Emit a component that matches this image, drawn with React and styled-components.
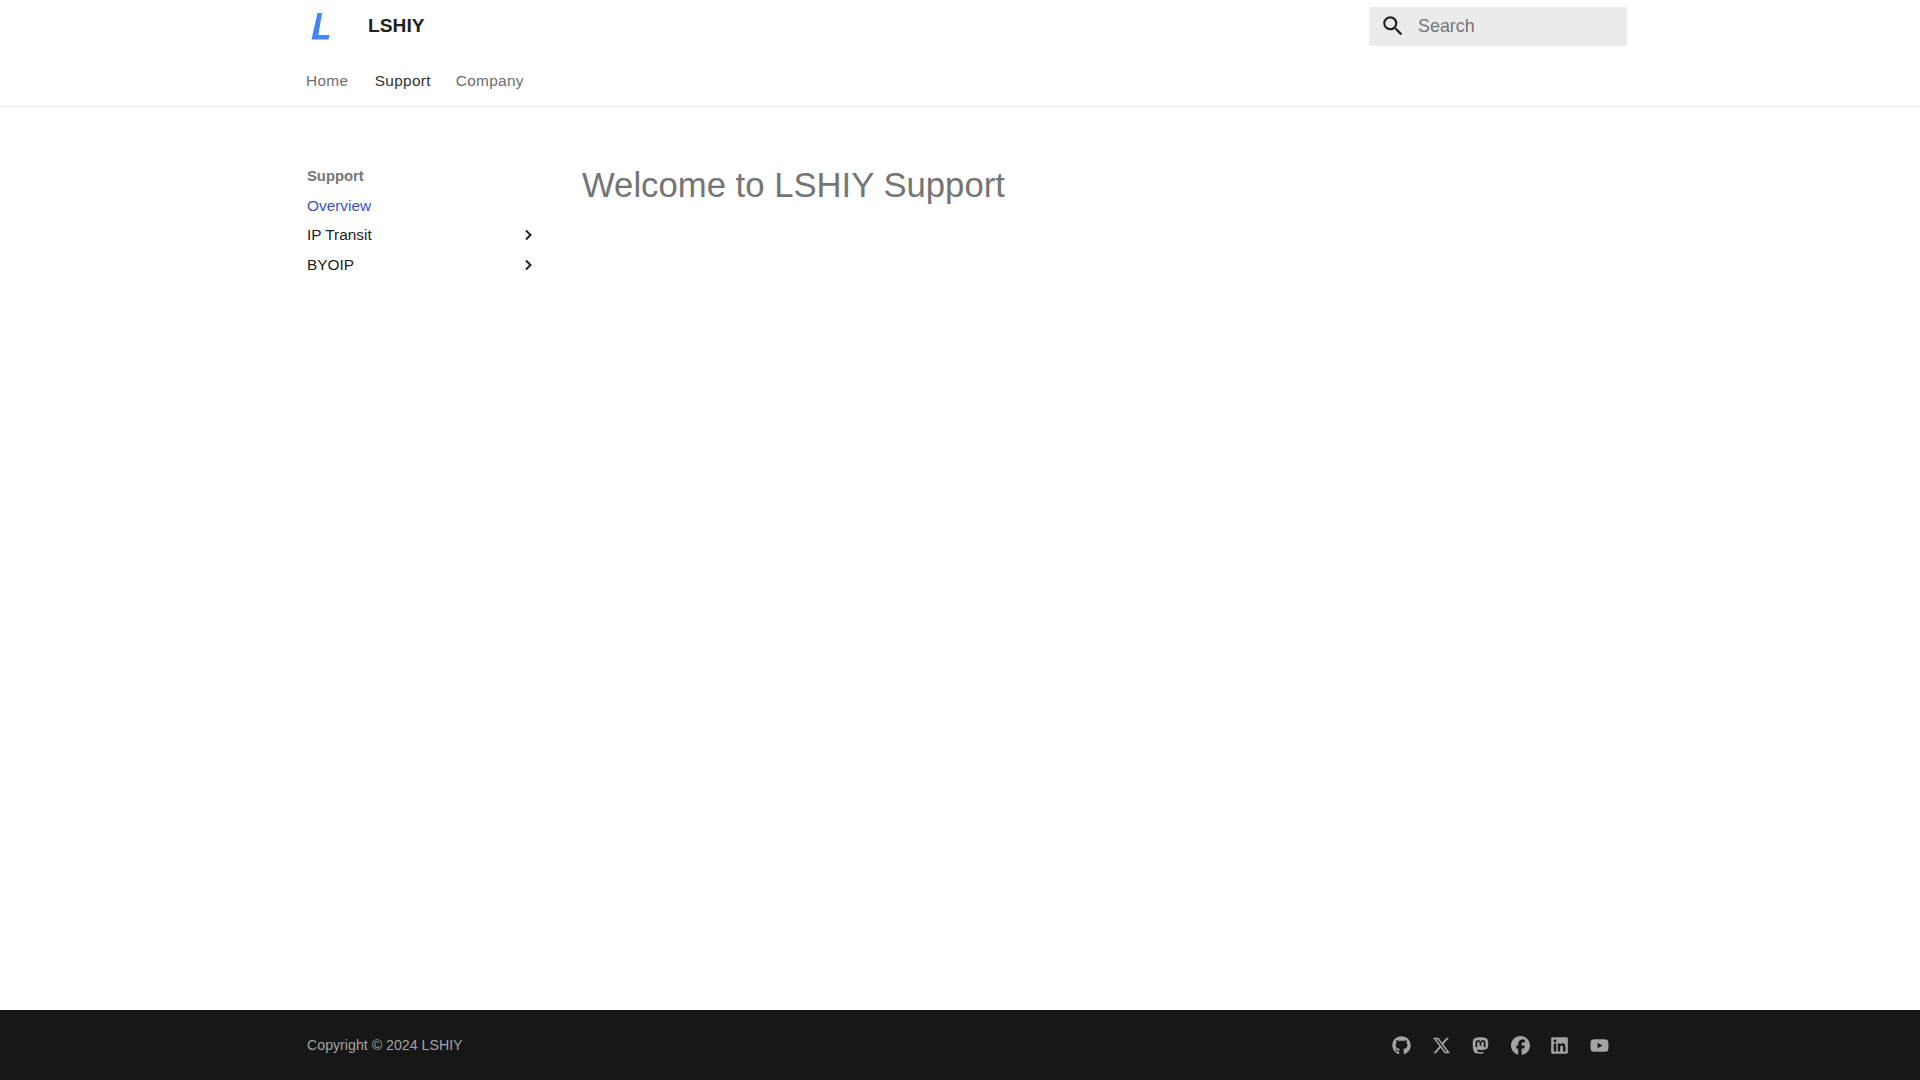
import React from 'react';
import styled, { createGlobalStyle } from 'styled-components';
import { FaGithub, FaXTwitter, FaMastodon, FaFacebook, FaLinkedin, FaYoutube } from 'react-icons/fa6';
import { MdSearch } from 'react-icons/md';

const Global = createGlobalStyle`
  html, body { margin: 0; padding: 0; height: 100%; }
  body { font-family: "Liberation Sans", Arial, sans-serif; background: #fff; color: #212121; }
  #root { height: 100%; }
`;

const Page = styled.div`
  display: flex;
  flex-direction: column;
  height: 1080px;
`;

const Header = styled.header`
  height: 106px;
  border-bottom: 1px solid #ebebeb;
  box-sizing: content-box;
  flex: none;
`;

const Container = styled.div`
  width: 1321px;
  margin-left: 306px;
  box-sizing: border-box;
`;

const TopRow = styled.div`
  display: flex;
  align-items: center;
  justify-content: space-between;
  height: 52px;
`;

const Brand = styled.a`
  display: flex;
  align-items: center;
  gap: 36px;
  padding-left: 2px;
  font-size: 19.2px;
  font-weight: 700;
  color: #212121;
`;

const Logo = styled.svg`
  width: 24px;
  height: 30px;
  display: block;
`;

const SearchBox = styled.div`
  display: flex;
  align-items: center;
  width: 258px;
  height: 39px;
  background: #ebebeb;
  border-radius: 2px;
  padding-left: 11px;
  box-sizing: border-box;
  color: #212121;
`;

const SearchText = styled.span`
  margin-left: 12px;
  font-size: 17.9px;
  color: #757575;
`;

const Tabs = styled.nav`
  display: flex;
  align-items: center;
  height: 54px;
  padding-top: 4px;
  box-sizing: border-box;
  font-size: 15.4px;
  letter-spacing: 0.3px;
`;

const Tab = styled.a`
  color: ${p => (p.$active ? '#333' : '#6e6e6e')};
  margin-left: ${p => p.$ml}px;
`;

const Body = styled.main`
  flex: 1;
`;

const Columns = styled(Container)`
  display: flex;
  padding-top: 54px;
`;

const Sidebar = styled.aside`
  width: 276px;
  flex: none;
  padding-left: 1px;
  box-sizing: border-box;
  font-size: 15.4px;
`;

const SideTitle = styled.div`
  font-weight: 700;
  font-size: 14.8px;
  color: #757575;
  line-height: 30px;
`;

const SideItem = styled.div`
  display: flex;
  align-items: center;
  justify-content: space-between;
  width: 228px;
  height: 29.6px;
  color: ${p => (p.$active ? '#3f51c4' : '#212121')};
`;

const Chevron = styled.svg`
  width: 12px;
  height: 12px;
  display: block;
  margin-right: 1px;
`;

const Title = styled.h1`
  margin: 2px 0 0;
  font-size: 34.7px;
  font-weight: 400;
  line-height: 44px;
  color: #757575;
`;

const Footer = styled.footer`
  height: 70px;
  flex: none;
  background: #171717;
`;

const FooterRow = styled(Container)`
  display: flex;
  align-items: center;
  justify-content: space-between;
  height: 70px;
  padding-left: 1px;
  padding-right: 18px;
`;

const Copy = styled.span`
  font-size: 14.2px;
  color: #a3a3a3;
`;

const Socials = styled.div`
  display: flex;
  align-items: center;
  gap: 20.6px;
  color: #a3a3a3;
  font-size: 19px;
  padding-top: 1px;
`;

export default function App() {
  return (
    <Page>
      <Global />
      <Header>
        <Container>
          <TopRow>
            <Brand>
              <Logo viewBox="0 0 24 30">
                <path d="M9.500 2h4.500L10.400 24H21.500l-1 4.500H3.500z" fill="#4285f4" />
              </Logo>
              LSHIY
            </Brand>
            <SearchBox>
              <MdSearch size={26} />
              <SearchText>Search</SearchText>
            </SearchBox>
          </TopRow>
          <Tabs>
            <Tab>Home</Tab>
            <Tab $active $ml={26.5}>Support</Tab>
            <Tab $ml={25}>Company</Tab>
          </Tabs>
        </Container>
      </Header>
      <Body>
        <Columns>
          <Sidebar>
            <SideTitle>Support</SideTitle>
            <SideItem $active>Overview</SideItem>
            <SideItem>IP Transit
              <Chevron viewBox="0 0 12 12"><path d="M4 1.500 8.500 6 4 10.500" fill="none" stroke="#212121" strokeWidth="2" /></Chevron>
            </SideItem>
            <SideItem>BYOIP
              <Chevron viewBox="0 0 12 12"><path d="M4 1.500 8.500 6 4 10.500" fill="none" stroke="#212121" strokeWidth="2" /></Chevron>
            </SideItem>
          </Sidebar>
          <Title>Welcome to LSHIY Support</Title>
        </Columns>
      </Body>
      <Footer>
        <FooterRow>
          <Copy>Copyright © 2024 LSHIY</Copy>
          <Socials>
            <FaGithub /><FaXTwitter /><FaMastodon /><FaFacebook /><FaLinkedin /><FaYoutube />
          </Socials>
        </FooterRow>
      </Footer>
    </Page>
  );
}
